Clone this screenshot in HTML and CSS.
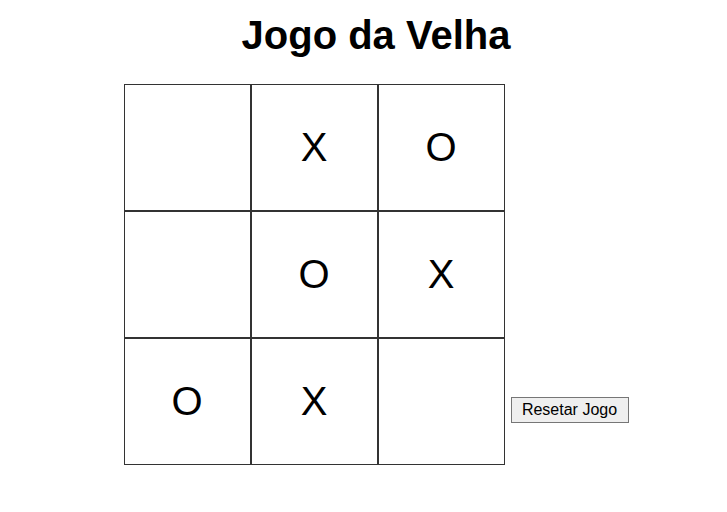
FILE: index.html
```html
<!DOCTYPE html>
<html lang="pt">
<head>
<meta charset="utf-8">
<title>Jogo da Velha</title>
<link rel="stylesheet" href="styles.css">
</head>
<body>
<div class="page">
  <h1 class="title">Jogo da Velha</h1>
  <div class="game">
    <div class="board">
      <div class="cell"></div>
      <div class="cell">X</div>
      <div class="cell">O</div>
      <div class="cell"></div>
      <div class="cell">O</div>
      <div class="cell">X</div>
      <div class="cell">O</div>
      <div class="cell">X</div>
      <div class="cell"></div>
    </div>
    <button class="reset" type="button">Resetar Jogo</button>
  </div>
</div>
</body>
</html>
```
FILE: styles.css
```css
html, body {
  background: #ffffff;
}
body {
  margin: 0 8px 8px;
  font-family: "Liberation Sans", Arial, sans-serif;
  color: #000;
}
.page {
  padding-left: 25px;
  text-align: center;
}
.title {
  font-size: 40px;
  font-weight: bold;
  line-height: 46px;
  margin: 12px 0 26px;
}
.game {
  display: flex;
  justify-content: center;
  align-items: flex-end;
  gap: 6px;
}
.board {
  display: grid;
  grid-template-columns: repeat(3, 127px);
  grid-auto-rows: 127px;
}
.cell {
  box-sizing: border-box;
  border: 1px solid #333333;
  display: flex;
  align-items: center;
  justify-content: center;
  font-size: 40px;
}
.reset {
  font-family: "Liberation Sans", Arial, sans-serif;
  font-size: 16px;
  width: 118px;
  height: 26px;
  padding: 0;
  margin-bottom: 42px;
  background: #efefef;
  border: 1px solid #767676;
  border-radius: 0;
  color: #000;
}
```
